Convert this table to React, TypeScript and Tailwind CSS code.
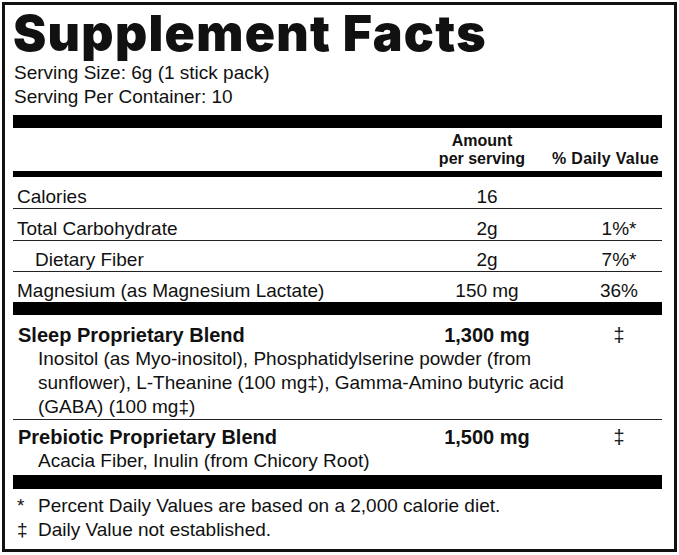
import React from "react";

const body = { fontFamily: '"Liberation Sans", Arial, sans-serif' };
const title = { fontFamily: 'Inter, "Liberation Sans", Arial, sans-serif' };

function Row({ label, amount, dv, indent, h }: { label: string; amount: string; dv?: string; indent?: boolean; h: string }) {
  return (
    <div className={`flex items-end ${h}`}>
      <div className={`flex-1 leading-[22px] ${indent ? "pl-[22px]" : "pl-[4px]"}`}>{label}</div>
      <div className="w-[130px] text-center leading-[22px]">{amount}</div>
      <div className="w-[110px] pl-[24px] text-center leading-[22px]">{dv ?? ""}</div>
    </div>
  );
}

export default function App() {
  return (
    <div className="bg-white w-[679px] h-[555px] pt-[2px] pl-[2px]">
      <div className="w-[675px] h-[550px] border-[3px] border-[#111] pl-[8px] pr-[12px] text-[19px] text-[#111]" style={body}>
        <div className="text-[50px] font-black leading-[56px] tracking-[1.3px] whitespace-nowrap" style={title}>
          Supplement Facts
        </div>
        <div className="pl-[1px] leading-[24px]">
          <div>Serving Size: 6g (1 stick pack)</div>
          <div>Serving Per Container: 10</div>
        </div>
        <div className="mt-[6px] h-[13px] bg-black" />
        <div className="flex items-end h-[43px] font-bold text-[16px] leading-[18px]">
          <div className="flex-1" />
          <div className="w-[130px] text-center pr-[10px] pb-[3px]">
            <div>Amount</div>
            <div>per serving</div>
          </div>
          <div className="w-[110px] text-right pr-[3px] pb-[3px] whitespace-nowrap tracking-[0.3px]">% Daily Value</div>
        </div>
        <div className="h-[6px] bg-black" />
        <Row label="Calories" amount="16" h="h-[32px] border-b border-[#222]" />
        <Row label="Total Carbohydrate" amount="2g" dv="1%*" h="h-[32px] border-b border-[#222]" />
        <Row label="Dietary Fiber" amount="2g" dv="7%*" indent h="h-[31px] border-b border-[#222]" />
        <Row label="Magnesium (as Magnesium Lactate)" amount="150 mg" dv="36%" h="h-[30px]" />
        <div className="h-[13px] bg-black" />
        <div className="pt-[8px] border-b border-[#222] leading-[24px]">
          <div className="flex font-bold text-[20px]">
            <div className="flex-1 pl-[5px]">Sleep Proprietary Blend</div>
            <div className="w-[130px] text-center">1,300 mg</div>
            <div className="w-[110px] pl-[24px] text-center font-normal">‡</div>
          </div>
          <div className="pl-[25px] whitespace-nowrap">
            Inositol (as Myo-inositol), Phosphatidylserine powder (from
            <br />
            sunflower), L-Theanine (100 mg‡), Gamma-Amino butyric acid
            <br />
            (GABA) (100 mg‡)
          </div>
        </div>
        <div className="pt-[5px] leading-[24px]">
          <div className="flex font-bold text-[20px]">
            <div className="flex-1 pl-[5px]">Prebiotic Proprietary Blend</div>
            <div className="w-[130px] text-center">1,500 mg</div>
            <div className="w-[110px] pl-[24px] text-center font-normal">‡</div>
          </div>
          <div className="pl-[25px]">Acacia Fiber, Inulin (from Chicory Root)</div>
        </div>
        <div className="mt-[2px] h-[14px] bg-black" />
        <div className="pt-[5px] leading-[24px]">
          <div className="flex">
            <div className="w-[25px] pl-[4px]">*</div>
            <div>Percent Daily Values are based on a 2,000 calorie diet.</div>
          </div>
          <div className="flex">
            <div className="w-[25px] pl-[4px]">‡</div>
            <div>Daily Value not established.</div>
          </div>
        </div>
      </div>
    </div>
  );
}
